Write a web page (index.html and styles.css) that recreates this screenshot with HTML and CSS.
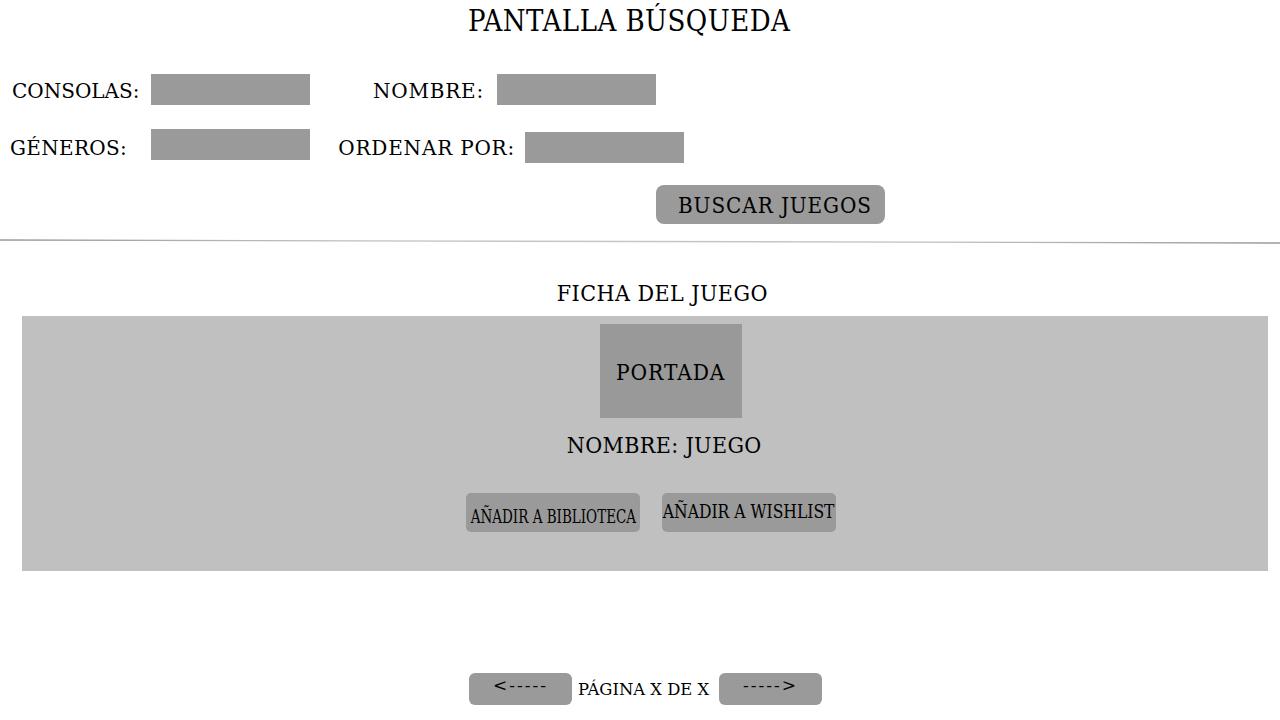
FILE: index.html
```html
<!DOCTYPE html>
<html lang="es">
<head>
<meta charset="utf-8">
<title>Pantalla Búsqueda</title>
<link rel="stylesheet" href="styles.css">
</head>
<body>
<header class="title-bar"><h1 class="title"><span class="narrow">PANTALLA BÚSQUEDA</span></h1></header>
<section class="filters">
  <div class="row row-1">
    <span class="lbl lbl-consolas">CONSOLAS:</span>
    <span class="field"></span>
    <span class="lbl lbl-nombre">NOMBRE:</span>
    <span class="field"></span>
  </div>
  <div class="row row-2">
    <span class="lbl lbl-generos">GÉNEROS:</span>
    <span class="field"></span>
    <span class="lbl lbl-ordenar">ORDENAR POR:</span>
    <span class="field field-low"></span>
  </div>
  <div class="row row-3">
    <button class="btn btn-buscar"><span class="narrow narrow-left">BUSCAR JUEGOS</span></button>
  </div>
</section>
<div class="divider">
  <svg width="1280" height="8" viewBox="0 0 1280 8">
    <defs>
      <linearGradient id="lg" x1="0" x2="1" y1="0" y2="0">
        <stop offset="0" stop-color="#999999"/>
        <stop offset="0.3" stop-color="#c6c6c6"/>
        <stop offset="0.7" stop-color="#c6c6c6"/>
        <stop offset="1" stop-color="#999999"/>
      </linearGradient>
    </defs>
    <line x1="0" y1="2" x2="1280" y2="5" stroke="url(#lg)" stroke-width="1.4"/>
  </svg>
</div>
<h2 class="ficha-title"><span class="narrow">FICHA DEL JUEGO</span></h2>
<section class="ficha">
  <div class="portada"><span class="narrow">PORTADA</span></div>
  <div class="game-name"><span class="narrow">NOMBRE: JUEGO</span></div>
  <div class="actions">
    <button class="btn btn-small btn-lib"><span class="btn-text">AÑADIR A BIBLIOTECA</span></button>
    <button class="btn btn-small btn-wish"><span class="btn-text">AÑADIR A WISHLIST</span></button>
  </div>
</section>
<nav class="pager">
  <button class="btn btn-page">&lt;-----</button>
  <span class="page-text">PÁGINA X DE X</span>
  <button class="btn btn-page">-----&gt;</button>
</nav>
</body>
</html>
```
FILE: styles.css
```css
* { box-sizing: border-box; }
html, body { margin: 0; padding: 0; background: #ffffff; }
body {
  width: 1280px;
  height: 720px;
  overflow: hidden;
  font-family: "DejaVu Serif", "Liberation Serif", serif;
  color: #000;
}
.narrow { display: inline-block; transform: scaleX(0.9); transform-origin: 50% 50%; white-space: nowrap; }
.narrow-left { transform: scaleX(0.91); transform-origin: 0 50%; }
.title-bar { height: 60px; padding-right: 22px; text-align: center; }
.title {
  margin: 0;
  padding-top: 3px;
  height: 60px;
  font-size: 29px;
  font-weight: normal;
  line-height: 36px;
  letter-spacing: 0.5px;
}
.filters { height: 178px; padding-top: 14px; }
.row { display: flex; align-items: center; }
.row-1 { height: 31px; padding-left: 12px; }
.row-2 { height: 34px; margin-top: 24px; padding-left: 10px; }
.row-3 { margin-top: 22px; padding-left: 656px; }
.lbl {
  font-size: 20px;
  line-height: 28px;
  height: 31px;
  padding-top: 3px;
  white-space: nowrap;
  letter-spacing: 0.8px;
}
.lbl-consolas { width: 139px; letter-spacing: 0; }
.lbl-generos { width: 141px; letter-spacing: 0.3px; }
.lbl-nombre { width: 187px; text-align: right; padding-right: 13px; }
.lbl-ordenar { width: 215px; text-align: right; padding-right: 10px; }
.field { display: block; width: 159px; height: 31px; background: #9a9a9a; flex: none; }
.row-2 .field { align-self: flex-start; }
.field-low { margin-top: 3px; }
.btn {
  font-family: inherit;
  border: none;
  color: #000;
  background: #9a9a9a;
  padding: 0;
  margin: 0;
  white-space: nowrap;
}
.btn-buscar {
  width: 229px;
  height: 39px;
  border-radius: 8px;
  font-size: 22px;
  letter-spacing: 1px;
  text-align: left;
  padding-left: 22px;
  padding-top: 1px;
}
.divider { height: 8px; }
.divider svg { display: block; }
.ficha-title {
  margin: 30px 0 0;
  height: 40px;
  padding-top: 1px;
  font-size: 23px;
  line-height: 32px;
  font-weight: normal;
  text-align: center;
  padding-left: 45px;
  letter-spacing: 0.5px;
}
.ficha {
  margin: 0 12px 0 22px;
  height: 255px;
  background: #c0c0c0;
  padding-top: 8px;
}
.portada {
  width: 142px;
  height: 94px;
  margin-left: 578px;
  padding-top: 2px;
  background: #999999;
  display: flex;
  align-items: center;
  justify-content: center;
  font-size: 22.5px;
  letter-spacing: 1px;
}
.game-name {
  margin-top: 10px;
  height: 40px;
  text-align: center;
  padding-left: 39px;
  font-size: 23px;
  line-height: 34px;
  letter-spacing: 0.4px;
}
.actions { display: flex; gap: 22px; margin-top: 25px; padding-left: 444px; }
.btn-small {
  width: 174px;
  height: 39px;
  border-radius: 5px;
  font-size: 19px;
  display: flex;
  justify-content: center;
  align-items: flex-start;
}
.btn-text { display: inline-block; line-height: 20px; flex: none; }
.btn-lib { padding-top: 13px; }
.btn-lib .btn-text { transform: scaleX(0.71); }
.btn-wish { padding-top: 8px; }
.btn-wish .btn-text { transform: scaleX(0.82); }
.pager {
  margin-top: 102px;
  display: flex;
  align-items: center;
  padding-left: 469px;
}
.btn-page {
  width: 103px;
  height: 32px;
  border-radius: 6px;
  font-size: 17px;
  text-align: center;
  padding-bottom: 8px;
  letter-spacing: 2px;
}
.page-text {
  font-size: 16.4px;
  width: 147px;
  padding-left: 6px;
  white-space: nowrap;
}
```
